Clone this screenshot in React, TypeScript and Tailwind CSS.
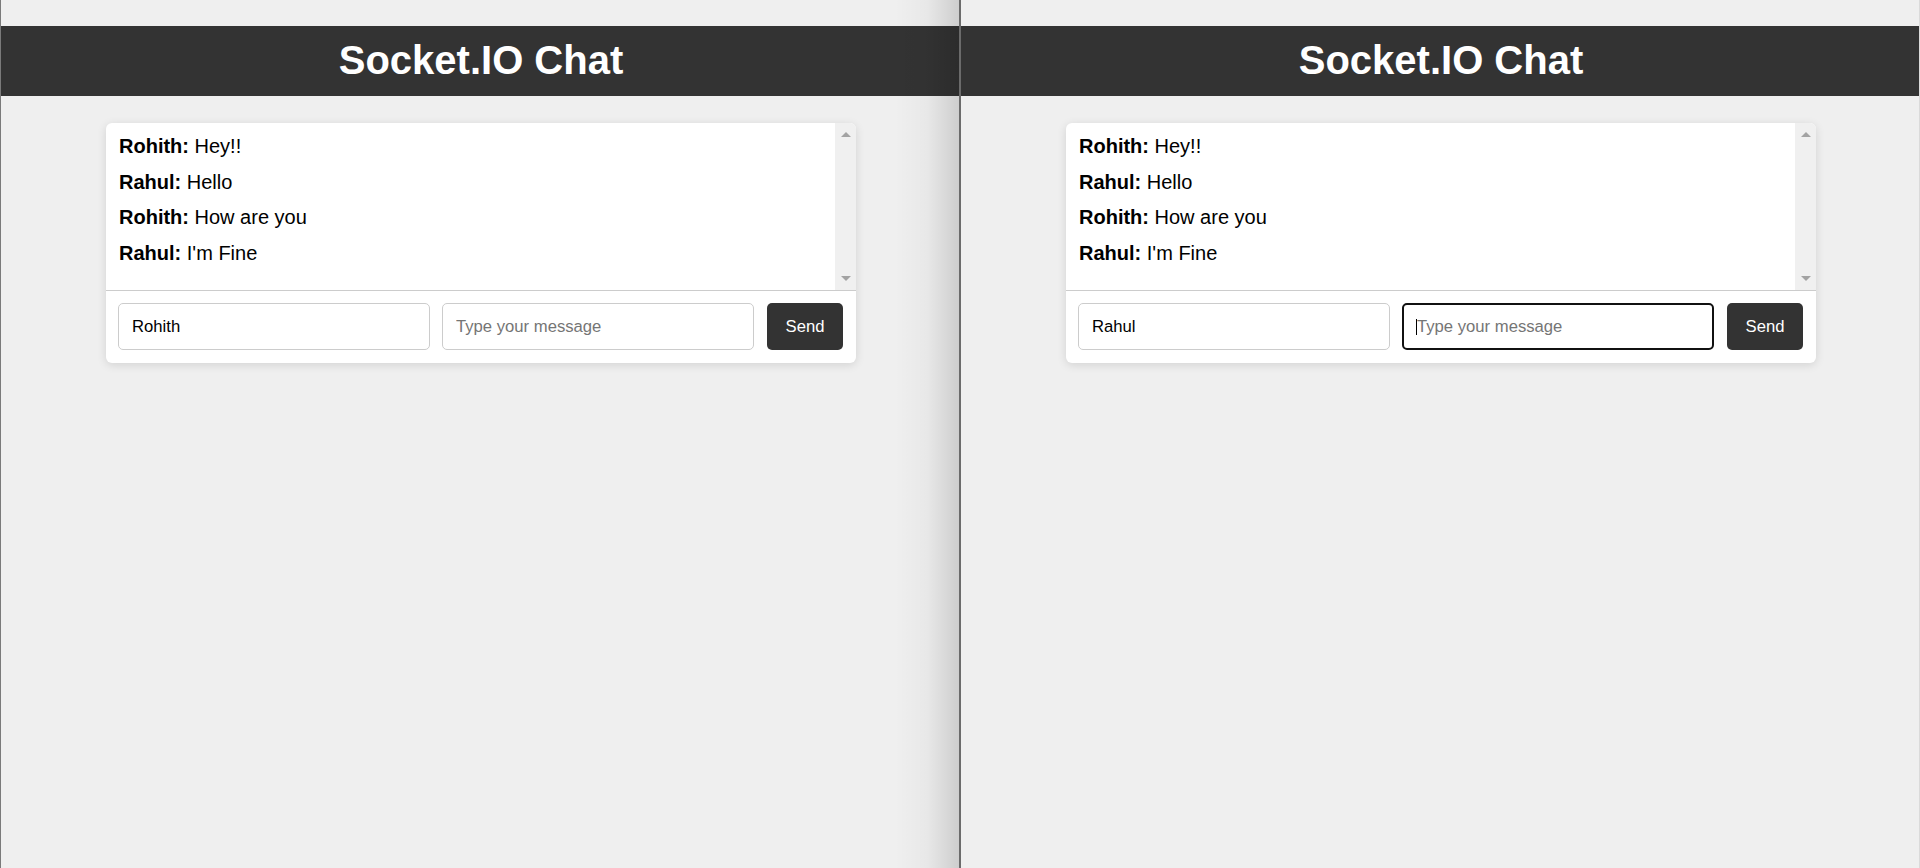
import React from 'react'

const MESSAGES = [
  { user: 'Rohith', text: 'Hey!!' },
  { user: 'Rahul', text: 'Hello' },
  { user: 'Rohith', text: 'How are you' },
  { user: 'Rahul', text: "I'm Fine" },
]

function ScrollTrack() {
  return (
    <div className="w-[21px] bg-[#f0f0f0] flex flex-col items-center justify-between pt-[9px] pb-[9px]">
      <svg width="10" height="5" viewBox="0 0 10 5">
        <path d="M0 5 L5 0 L10 5 Z" fill="#a3a3a3" />
      </svg>
      <svg width="10" height="5" viewBox="0 0 10 5">
        <path d="M0 0 L10 0 L5 5 Z" fill="#a3a3a3" />
      </svg>
    </div>
  )
}

function ChatWindow({ name, focused, shadow }: { name: string; focused?: boolean; shadow?: boolean }) {
  return (
    <div className="relative w-[958px] h-full pt-[26px]">
      {/* Header */}
      <div className="h-[70px] bg-[#333333] flex items-center justify-center pl-[2px]">
        <h1 className="text-white text-[40px] font-bold leading-[46px] -mt-[2px]">Socket.IO Chat</h1>
      </div>

      {/* Chat card */}
      <div className="pl-[2px] mt-[27px]">
        <div className="w-[750px] mx-auto bg-white rounded-[6px] overflow-hidden shadow-[0_2px_10px_rgba(0,0,0,0.12)]">
          <div className="h-[167px] flex">
            <ul className="flex-1 pt-[6px]">
              {MESSAGES.map((m, i) => (
                <li key={i} className="px-[13px] py-[6.25px] text-[20px] leading-[23px] text-black">
                  <strong className="font-bold">{m.user}:</strong> {m.text}
                </li>
              ))}
            </ul>
            <ScrollTrack />
          </div>

          {/* Input row */}
          <div className="border-t border-[#cccccc] flex items-center pt-[12px] pb-[13px] pl-[12px] pr-[13px]">
            <input
              readOnly
              defaultValue={name}
              className="w-[312px] h-[47px] border border-[#cccccc] rounded-[5px] pl-[13px] text-[16.67px] text-black outline-none"
            />
            <div className="relative ml-[12px]">
              <input
                readOnly
                placeholder="Type your message"
                className={
                  focused
                    ? 'w-[312px] h-[47px] border-2 border-[#111111] rounded-[5px] pl-[13px] text-[16.67px] text-black placeholder:text-[#757575] outline-none'
                    : 'w-[312px] h-[47px] border border-[#cccccc] rounded-[5px] pl-[13px] text-[16.67px] text-black placeholder:text-[#757575] outline-none'
                }
              />
              {focused && <span className="absolute left-[14px] top-[16px] w-px h-[16px] bg-black" />}
            </div>
            <button className="ml-[13px] w-[76px] h-[47px] bg-[#333333] text-white rounded-[5px] text-[16.67px]">
              Send
            </button>
          </div>
        </div>
      </div>

      {shadow && (
        <div className="pointer-events-none absolute inset-y-0 right-0 w-[64px] bg-linear-to-r from-transparent via-black/[0.03] to-black/[0.14]" />
      )}
    </div>
  )
}

export default function App() {
  return (
    <div className="flex w-[1920px] h-[868px] overflow-hidden bg-[#efefef] font-['Liberation_Sans',Arial,sans-serif]">
      <div className="w-px bg-[#7a7a7a]" />
      <ChatWindow name="Rohith" shadow />
      <div className="w-[2px] bg-[#6b6b6b]" />
      <ChatWindow name="Rahul" focused />
      <div className="w-px bg-[#dadada]" />
    </div>
  )
}
